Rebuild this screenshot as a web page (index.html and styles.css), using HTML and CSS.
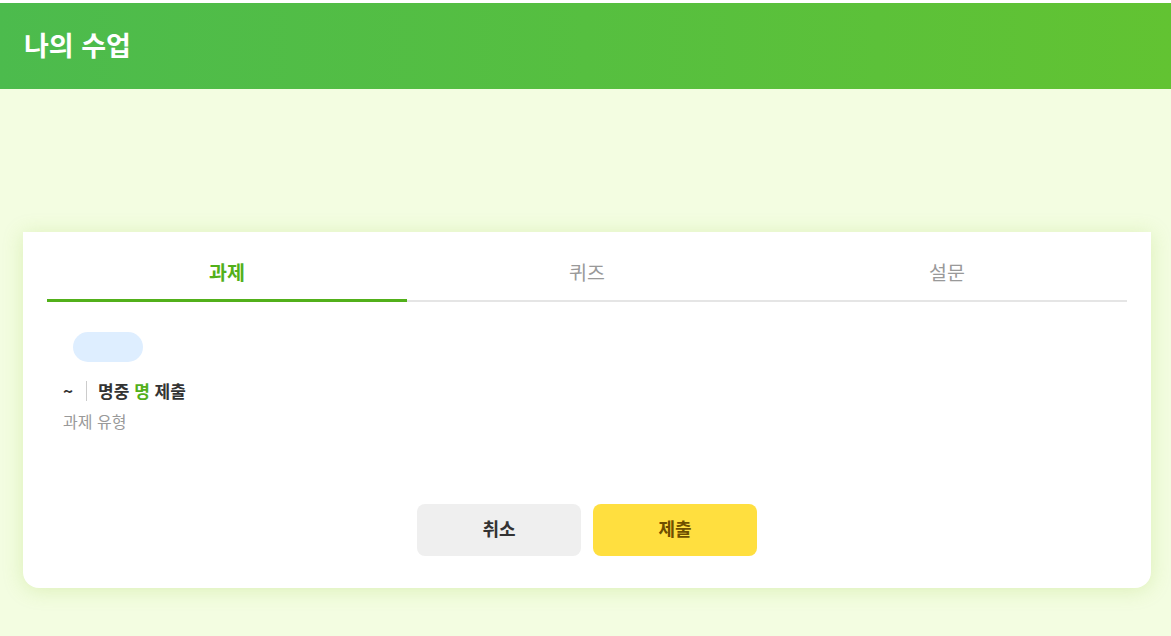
FILE: index.html
```html
<!DOCTYPE html>
<html lang="ko">
<head>
<meta charset="utf-8">
<title>나의 수업</title>
<link rel="stylesheet" href="styles.css">
</head>
<body>
<div class="page">
  <header class="header">
    <h1 class="title">나의 수업</h1>
  </header>
  <main class="main">
    <section class="card">
      <nav class="tabs">
        <div class="tab active">과제</div>
        <div class="tab">퀴즈</div>
        <div class="tab">설문</div>
      </nav>
      <div class="content">
        <div class="chip"></div>
        <div class="meta">
          <span class="period">~</span>
          <span class="sep"></span>
          <span class="count">명중 <em class="hl">명</em> 제출</span>
        </div>
        <div class="type">과제 유형</div>
      </div>
      <div class="actions">
        <button class="btn cancel">취소</button>
        <button class="btn submit">제출</button>
      </div>
    </section>
  </main>
</div>
</body>
</html>
```
FILE: styles.css
```css
* { box-sizing: border-box; }
html, body {
  margin: 0;
  padding: 0;
  height: 100%;
}
body {
  font-family: "Noto Sans CJK KR", "Noto Sans", sans-serif;
  background: #ffffff;
  color: #333;
}
.page {
  padding-top: 3px;
  min-height: 100%;
  display: flex;
  flex-direction: column;
}
.header {
  height: 86px;
  background: linear-gradient(90deg, #4cbb4d 0%, #56bf40 50%, #62c332 100%);
  display: flex;
  align-items: center;
  padding-left: 24px;
}
.title {
  margin: 0;
  color: #fff;
  font-size: 27px;
  font-weight: 700;
  line-height: 1;
  padding-bottom: 3px;
}
.main {
  flex: 1;
  background: #f3fde1;
  padding: 143px 20px 0 23px;
}
.card {
  background: #fff;
  border-radius: 0 0 16px 16px;
  box-shadow: 0 2px 20px rgba(150, 200, 60, 0.25);
  padding: 10px 24px 32px;
}
.tabs {
  display: flex;
  border-bottom: 2px solid #e5e5e5;
}
.tab {
  flex: 1;
  text-align: center;
  font-size: 19.5px;
  line-height: 27px;
  padding: 16px 0 14px;
  color: #999;
  font-weight: 400;
  margin-bottom: -2px;
  border-bottom: 3px solid transparent;
}
.tab.active {
  color: #52b01a;
  font-weight: 700;
  border-bottom-color: #52b01a;
}
.content {
  padding: 30px 16px 0;
  height: 202px;
}
.chip {
  width: 70px;
  height: 30px;
  margin-left: 10px;
  border-radius: 15px;
  background: #deeeff;
}
.meta {
  margin-top: 17px;
  display: flex;
  align-items: center;
  font-size: 17px;
  line-height: 24px;
  font-weight: 700;
  color: #333;
}
.sep {
  width: 1px;
  height: 20px;
  background: #ccc;
  margin: 0 11px 0 13px;
}
.hl {
  font-style: normal;
  color: #52b01a;
}
.type {
  margin-top: 8px;
  font-size: 16px;
  line-height: 21px;
  color: #999;
}
.actions {
  display: flex;
  justify-content: center;
  gap: 12px;
}
.btn {
  width: 164px;
  height: 52px;
  border: none;
  border-radius: 8px;
  font-family: inherit;
  font-size: 18px;
  font-weight: 700;
  padding: 0 0 4px;
}
.cancel {
  background: #efefef;
  color: #333;
}
.submit {
  background: #ffdf3f;
  color: #6e4e00;
}
```
